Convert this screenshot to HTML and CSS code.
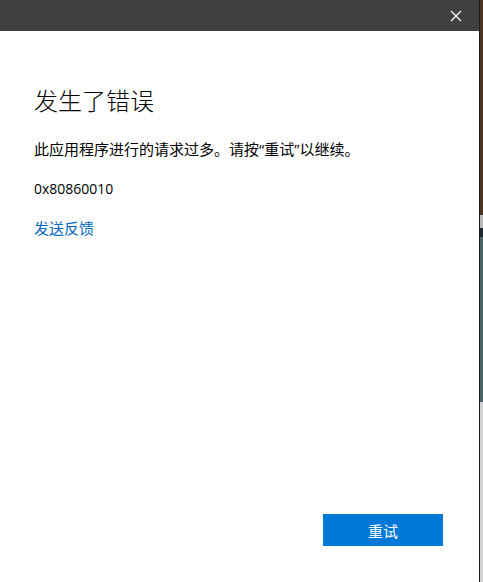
FILE: index.html
```html
<!DOCTYPE html>
<html lang="zh-CN">
<head>
    <meta charset="UTF-8">
    <meta name="viewport" content="width=device-width, initial-scale=1.0">
    <title>发生了错误</title>
    <link rel="stylesheet" href="styles.css">
</head>
<body>
    <div class="screen">
        <div class="dialog">
            <div class="titlebar">
                <button class="close-btn" aria-label="关闭">
                    <svg width="12" height="12" viewBox="0 0 12 12">
                        <path d="M1 1 L11 11 M11 1 L1 11" stroke="#fff" stroke-width="1.2" fill="none"/>
                    </svg>
                </button>
            </div>

            <div class="content">
                <h1>发生了错误</h1>
                <p class="message">此应用程序进行的请求过多。请按“重试”以继续。</p>
                <p class="code">0x80860010</p>
                <a class="feedback" href="#">发送反馈</a>
            </div>

            <div class="actions">
                <button class="retry-btn">重试</button>
            </div>
        </div>
        <div class="desktop"></div>
    </div>
</body>
</html>
```

FILE: styles.css
```css
html, body {
    margin: 0;
    height: 100%;
}
body {
    font-family: "Open Sans", "Noto Sans CJK SC", sans-serif;
    background: #d4d4d4;
    overflow: hidden;
}
.screen {
    display: flex;
    height: 582px;
}
.dialog {
    width: 479px;
    flex-shrink: 0;
    display: flex;
    flex-direction: column;
    background: white;
}
.titlebar {
    height: 31px;
    background: #404040;
    display: flex;
    justify-content: flex-end;
}
.close-btn {
    width: 46px;
    height: 31px;
    border: none;
    background: transparent;
    padding: 0;
    display: flex;
    align-items: center;
    justify-content: center;
}
.content {
    padding: 54px 34px 0;
    color: #000;
}
h1 {
    margin: 0;
    font-size: 24px;
    font-weight: 300;
    line-height: 32px;
}
.message {
    margin: 22px 0 0;
    font-size: 15px;
    line-height: 20px;
}
.code {
    margin: 20px 0 0;
    font-size: 14px;
    line-height: 20px;
}
.feedback {
    display: inline-block;
    margin-top: 19px;
    font-size: 15px;
    line-height: 20px;
    color: #0067c0;
    text-decoration: none;
}
.actions {
    margin-top: auto;
    display: flex;
    justify-content: flex-end;
    padding: 0 36px 36px 0;
}
.retry-btn {
    width: 120px;
    height: 32px;
    border: none;
    background: #0078d7;
    color: white;
    font-family: "Open Sans", "Noto Sans CJK SC", sans-serif;
    font-size: 15px;
}
.desktop {
    width: 3px;
    border-left: 1px solid #1c1c1c;
    background: linear-gradient(to bottom,
        #4b3524 0, #4b3524 215px,
        #b8b8b8 215px, #b8b8b8 228px,
        #1e2a30 228px, #1e2a30 237px,
        #4c6468 237px, #4c6468 402px,
        #d2d2d2 402px, #d2d2d2 100%);
}
```
